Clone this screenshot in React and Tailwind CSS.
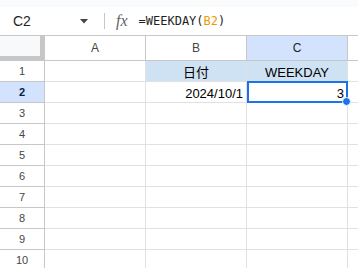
import React from 'react';

const cols = ['A', 'B', 'C'];
const rows = [1, 2, 3, 4, 5, 6, 7, 8, 9, 10];

const cellData = {
    B1: { text: '日付', align: 'center', fill: true },
    C1: { text: 'WEEKDAY', align: 'center', fill: true },
    B2: { text: '2024/10/1', align: 'right' },
    C2: { text: '3', align: 'right', selected: true },
};

const Cell = ({ id }) => {
    const data = cellData[id];
    const alignClass = data?.align === 'center' ? 'justify-center' : data?.align === 'right' ? 'justify-end' : 'justify-start';
    return (
        <div
            className={`relative box-border flex items-center px-[3px] border-r border-b border-[#e1e1e1] text-[13px] text-black ${alignClass} ${data?.fill ? 'bg-[#cfe2f3]' : 'bg-white'} ${data?.selected ? 'z-10' : ''}`}
        >
            {data?.text && <span className="whitespace-nowrap leading-none pt-[2px]">{data.text}</span>}
            {data?.selected && (
                <>
                    <div className="absolute -top-px -bottom-px left-0 -right-px border-2 border-[#1a73e8] pointer-events-none" />
                    <div className="absolute -bottom-[4px] -right-[4px] w-[9px] h-[9px] rounded-full bg-[#1a73e8] border border-white" />
                </>
            )}
        </div>
    );
};

const App = () => {
    return (
        <div
            className="w-[358px] h-[268px] overflow-hidden bg-white"
            style={{ fontFamily: '"Liberation Sans", Arial, "Noto Sans CJK JP", sans-serif' }}
        >
            {/* top strip */}
            <div className="h-[7px] bg-[#f9fbfd]" />

            {/* formula bar */}
            <div className="h-[29px] box-border border-b border-[#c7c7c7] flex items-center bg-white">
                <div className="w-[104px] flex items-center pl-[13px] pr-[12px]">
                    <span className="text-[14px] text-[#1f1f1f] flex-1">C2</span>
                    <svg width="8" height="5" viewBox="0 0 8 5" className="mr-[4px]">
                        <path d="M0 0 L8 0 L4 4.5 Z" fill="#444746" />
                    </svg>
                </div>
                <div className="w-px h-[16px] bg-[#c7c7c7]" />
                <span
                    className="ml-[11px] text-[16px] italic text-[#5f6368] leading-none"
                    style={{ fontFamily: '"Liberation Serif", "Times New Roman", serif' }}
                >
                    fx
                </span>
                <span
                    className="ml-[11px] text-[12px] text-[#1f1f1f]"
                    style={{ fontFamily: '"DejaVu Sans Mono", "Liberation Mono", monospace' }}
                >
                    =WEEKDAY(<span className="text-[#f29900]">B2</span>)
                </span>
            </div>

            {/* grid */}
            <div className="grid grid-cols-[45px_101px_101px_101px_1fr] grid-rows-[25px_repeat(10,21px)]">
                <div className="box-border bg-[#f8f9fa] border-r-[5px] border-b-[5px] border-[#c7c7c7]" />
                {cols.map((c) => (
                    <div
                        key={c}
                        className={`box-border flex items-center justify-center border-r border-b border-[#c7c7c7] text-[12px] ${c === 'C' ? 'bg-[#d3e3fd] text-[#1f1f1f]' : 'bg-white text-[#444746]'}`}
                    >
                        {c}
                    </div>
                ))}
                <div className="box-border border-b border-[#c7c7c7] bg-white" />

                {rows.map((r) => (
                    <React.Fragment key={r}>
                        <div
                            className={`box-border flex items-center justify-center border-r border-b border-[#c7c7c7] text-[11px] ${r === 2 ? 'bg-[#d3e3fd] text-[#041e49] font-bold' : 'bg-white text-[#444746]'}`}
                        >
                            {r}
                        </div>
                        {cols.map((c) => (
                            <Cell key={c + r} id={c + r} />
                        ))}
                        <div className="box-border border-b border-[#e1e1e1] bg-white" />
                    </React.Fragment>
                ))}
            </div>
        </div>
    );
};

export default App;
